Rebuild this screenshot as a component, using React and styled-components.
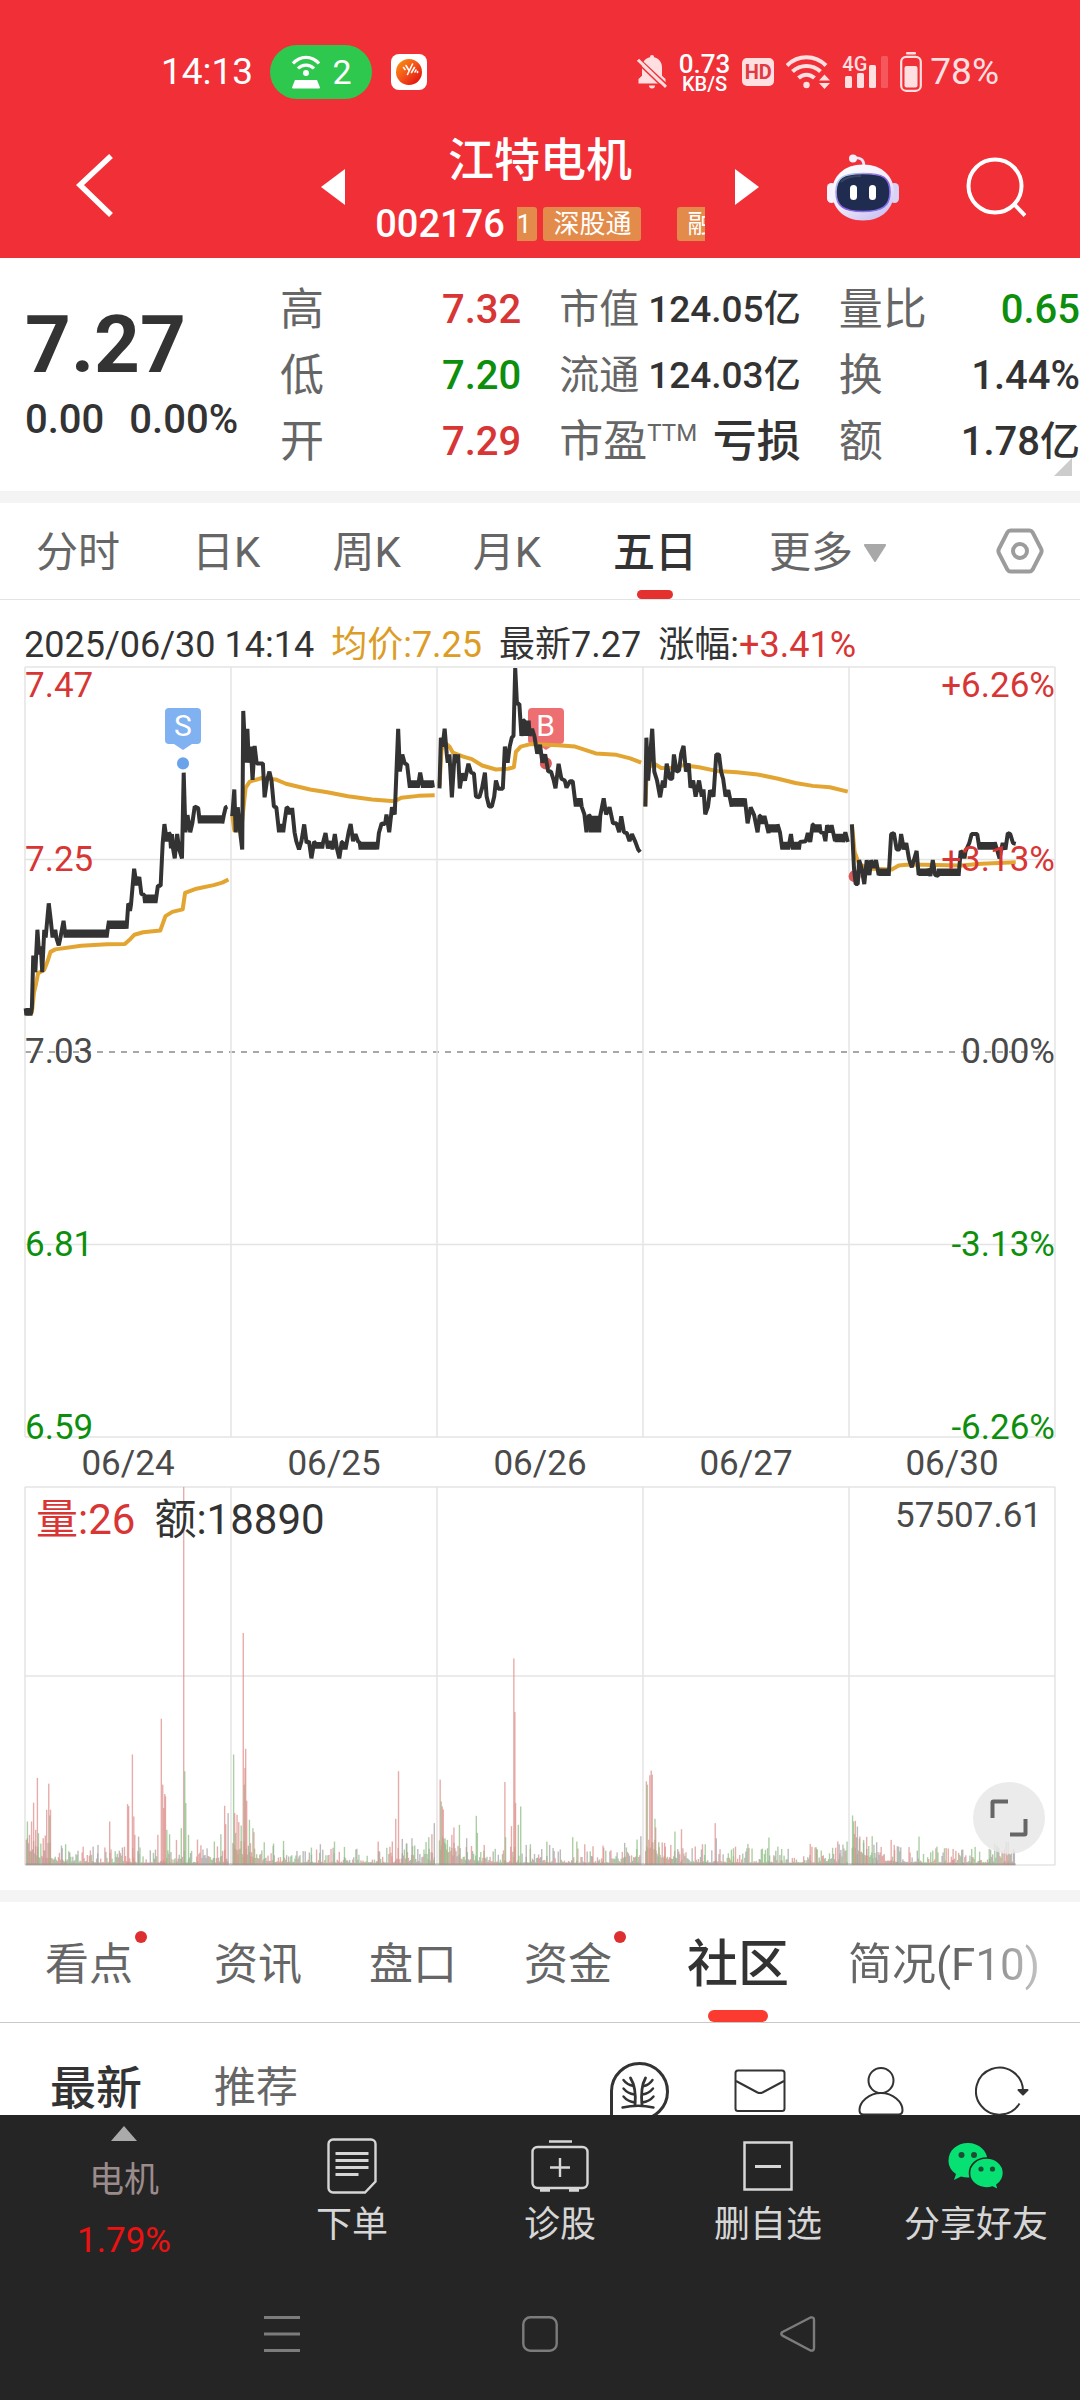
import React from "react";
import styled, { createGlobalStyle, css } from "styled-components";

const RED = "#d83535";
const GREEN = "#0d8f0d";
const INK = "#333333";
const GREY = "#666666";

const GlobalStyle = createGlobalStyle`
  * { box-sizing: border-box; }
  body {
    margin: 0;
    background: #ffffff;
    color: ${INK};
    font-family: Roboto, "Noto Sans CJK SC", sans-serif;
    -webkit-font-smoothing: antialiased;
  }
  button {
    margin: 0;
    padding: 0;
    border: 0;
    background: none;
    font: inherit;
    color: inherit;
    cursor: pointer;
  }
  dl, dd, dt, h1, p { margin: 0; font-weight: inherit; font-size: inherit; }
  svg { display: block; }
`;

/* ---------- page frame ---------- */

const Page = styled.div`
  display: flex;
  flex-direction: column;
  height: 100vh;
  overflow: hidden;
`;

const Content = styled.main`
  flex: 1;
  min-height: 0;
  overflow: hidden;
`;

const Band = styled.div`
  height: 12px;
  background: #f4f4f4;
`;

/* ---------- header ---------- */

const Header = styled.header`
  flex: none;
  background: #f12f37;
  color: #ffffff;
`;

const StatusBar = styled.div`
  display: flex;
  justify-content: space-between;
  align-items: center;
  height: 100px;
  padding: 44px 81px 0 161px;
`;

const StatusGroup = styled.div`
  display: flex;
  align-items: center;
  gap: ${(p) => p.$gap}px;
  color: ${(p) => p.$color || "#ffffff"};
`;

const Clock = styled.span`
  font-size: 37px;
  line-height: 58px;
`;

const Hotspot = styled.span`
  display: flex;
  align-items: center;
  justify-content: center;
  gap: 12px;
  width: 102px;
  height: 54px;
  border-radius: 27px;
  background: #2fc84f;
  font-size: 34px;
`;

const AppBadge = styled.span`
  display: grid;
  place-items: center;
  width: 36px;
  height: 36px;
  margin-left: 2px;
  border-radius: 8px;
  background: #ffffff;
`;

const Speed = styled.span`
  display: flex;
  flex-direction: column;
  align-items: center;
  padding-top: 3px;
  color: #ffffff;
  font-weight: 500;
  font-size: 26px;
  line-height: 20px;
  small { font-size: 20px; line-height: 20px; }
`;

const Hd = styled.span`
  width: 32px;
  height: 28px;
  border-radius: 5px;
  background: #ffdfe0;
  color: #e03a42;
  font-weight: 700;
  font-size: 20px;
  line-height: 28px;
  text-align: center;
`;

const Battery = styled.span`
  display: flex;
  align-items: center;
  gap: 8px;
  font-size: 37px;
  line-height: 58px;
`;

const TitleBar = styled.div`
  display: grid;
  grid-template-columns: minmax(0, 1fr) 390px minmax(0, 1fr);
  align-items: center;
  height: 158px;
  padding-top: 16px;
`;

const LeftTools = styled.div`
  display: flex;
  align-items: center;
  justify-content: space-between;
  padding-left: 74px;
`;

const RightTools = styled.div`
  display: flex;
  align-items: center;
  justify-content: space-between;
  padding-right: 54px;
`;

const Title = styled.div`
  padding-top: 10px;
  text-align: center;
  h1 {
    font-size: 46px;
    font-weight: 500;
    line-height: 64px;
  }
`;

const CodeRow = styled.div`
  display: flex;
  align-items: center;
  justify-content: center;
  gap: 12px;
  height: 64px;
  font-size: 38px;
  font-weight: 500;
`;

const TagStrip = styled.div`
  display: flex;
  width: 188px;
  overflow: hidden;
`;

const Tag = styled.span`
  flex: none;
  height: 34px;
  margin-right: ${(p) => p.$after || 0}px;
  padding: 0 10px;
  border-radius: 3px;
  background: #e38b4a;
  font-size: 26px;
  font-weight: 400;
  line-height: 34px;
  ${(p) => p.$cut && css`
    padding: 0 6px 0 0;
    border-radius: 0 3px 3px 0;
  `}
`;

/* ---------- quote ---------- */

const Quote = styled.section`
  position: relative;
  display: grid;
  grid-template-columns: 242px repeat(3, minmax(0, 1fr));
  column-gap: 38px;
  height: 233px;
  padding: 19px 0 16px;
`;

const PriceBlock = styled.div`
  padding: 22px 0 0 25px;
  font-weight: 500;
  white-space: nowrap;
`;

const Price = styled.p`
  && { font-size: 80px; font-weight: 700; }
  line-height: 92px;
`;

const Change = styled.p`
  display: flex;
  gap: 25px;
  && { font-size: 40px; }
  line-height: 58px;
`;

const Figures = styled.dl`
  display: flex;
  flex-direction: column;
`;

const Figure = styled.div`
  display: flex;
  justify-content: space-between;
  white-space: nowrap;
  line-height: 66px;
  dt {
    display: flex;
    font-size: ${(p) => (p.$compact ? 40 : 44)}px;
    color: ${GREY};
  }
  dd {
    font-size: ${(p) => (p.$compact ? 37 : p.$word ? 44 : 40)}px;
    font-weight: 500;
    color: ${(p) => p.$tone || INK};
  }
  sup {
    font-size: 24px;
    line-height: 48px;
    vertical-align: baseline;
  }
`;

const Corner = styled.svg`
  position: absolute;
  right: 8px;
  bottom: 15px;
`;

/* ---------- period tabs ---------- */

const Periods = styled.nav`
  display: flex;
  align-items: stretch;
  gap: 72px;
  height: 97px;
  padding: 0 36px;
  border-bottom: 1px solid #e4e4e4;
`;

const Period = styled.button`
  position: relative;
  display: flex;
  align-items: center;
  gap: 11px;
  font-size: 42px;
  line-height: 60px;
  white-space: nowrap;
  && {
    padding-top: 4px;
    color: ${(p) => (p.$active ? INK : GREY)};
    font-weight: ${(p) => (p.$active ? 500 : 400)};
  }
  ${(p) => p.$active && css`
    &::after {
      content: "";
      position: absolute;
      left: 50%;
      bottom: 0;
      width: 36px;
      height: 9px;
      margin-left: -18px;
      border-radius: 5px;
      background: #e53030;
    }
  `}
`;

const Settings = styled.button`
  && { margin-left: auto; }
`;

/* ---------- charts ---------- */

const Legend = styled.div`
  display: flex;
  gap: 17px;
  height: 67px;
  padding: 24px 24px 0;
  font-size: 36px;
  line-height: 43px;
  white-space: nowrap;
`;

const Tone = styled.span`
  color: ${(p) => p.$c || INK};
`;

const Plot = styled.div`
  position: relative;
  height: ${(p) => p.$h}px;
  margin: 0 25px;
`;

const Canvas = styled.svg`
  position: absolute;
  inset: 0;
  width: 100%;
  height: 100%;
  overflow: visible;
`;

const AxisLabel = styled.span`
  position: absolute;
  ${(p) => (p.$right ? "right: 0;" : "left: 0;")}
  transform: translateY(${(p) => p.$shift}%);
  font-size: 35px;
  line-height: 38px;
  color: ${(p) => p.$c};
`;

const Pin = styled.span`
  position: absolute;
  display: flex;
  flex-direction: column;
  align-items: center;
  width: 36px;
  margin-left: -18px;
  b {
    width: 36px;
    height: 36px;
    border-radius: 4px;
    background: ${(p) => p.$c};
    color: #ffffff;
    font-size: 30px;
    font-weight: 400;
    line-height: 36px;
    text-align: center;
  }
`;

const Dates = styled.div`
  display: grid;
  grid-template-columns: repeat(5, 1fr);
  height: 50px;
  margin: 0 25px;
  padding-top: 3px;
  color: #4a4a4a;
  font-size: 35px;
  line-height: 48px;
  text-align: center;
`;

const VolumeLegend = styled.div`
  position: relative;
  display: flex;
  align-items: flex-start;
  gap: 19px;
  padding: 0 13px 0 11px;
  font-size: 42px;
  line-height: 66px;
`;

const VolumeMax = styled.span`
  margin-left: auto;
  color: #4a4a4a;
  font-size: 35px;
  line-height: 58px;
`;

const Expand = styled.button`
  && {
    position: absolute;
    right: 10px;
    bottom: 11px;
    display: grid;
    place-items: center;
    width: 72px;
    height: 72px;
    border-radius: 50%;
    background: rgba(232, 232, 232, 0.85);
  }
`;

/* ---------- sections ---------- */

const Sections = styled.nav`
  display: flex;
  gap: 67px;
  height: 121px;
  padding-left: 45px;
  border-bottom: 1px solid #c8c8c8;
  overflow: hidden;
`;

const Section = styled.button`
  position: relative;
  flex: none;
  display: flex;
  white-space: nowrap;
  line-height: 126px;
  && {
    font-size: ${(p) => (p.$active ? 51 : 44)}px;
    font-weight: ${(p) => (p.$active ? 500 : 400)};
    color: ${(p) => (p.$active ? INK : GREY)};
    margin: ${(p) => (p.$active ? "0 -8px 0 -6px" : "0")};
  }
  ${(p) => p.$fade && css`
    && {
      background: linear-gradient(90deg, ${GREY} 60%, #c4c4c4 100%);
      background-clip: text;
      color: transparent;
    }
  `}
  ${(p) => p.$active && css`
    &::after {
      content: "";
      position: absolute;
      left: 50%;
      bottom: 0;
      width: 60px;
      height: 12px;
      margin-left: -30px;
      border-radius: 6px;
      background: #fc3b30;
    }
  `}
`;

const Dot = styled.i`
  width: 12px;
  height: 12px;
  margin: 29px 0 0 2px;
  border-radius: 50%;
  background: #dd2f2f;
`;

const VolumeGap = styled.div`
  height: 25px;
`;

const Feed = styled.div`
  display: flex;
  align-items: center;
  height: 136px;
  padding: 0 48px 0 50px;
`;

const FeedTab = styled.button`
  line-height: 60px;
  && {
    margin-right: 72px;
    padding-bottom: 6px;
    font-size: ${(p) => (p.$active ? 46 : 42)}px;
    font-weight: ${(p) => (p.$active ? 500 : 400)};
    color: ${(p) => (p.$active ? INK : GREY)};
  }
`;

const FeedTools = styled.div`
  display: flex;
  gap: 61px;
  margin-left: auto;
`;

const IconButton = styled.button`
  display: grid;
  place-items: center;
  ${(p) => p.$size && css`
    width: ${p.$size}px;
    height: ${p.$size}px;
  `}
`;

/* ---------- footer ---------- */

const Footer = styled.footer`
  flex: none;
  background: #252525;
  color: #d6d6d6;
`;

const Toolbar = styled.div`
  display: grid;
  grid-template-columns: 248px repeat(4, minmax(0, 1fr));
  height: 170px;
`;

const Tool = styled.button`
  display: flex;
  flex-direction: column;
  align-items: center;
  && { padding-top: 23px; }
  font-size: 36px;
  line-height: 62px;
  white-space: nowrap;
`;

const ToolIcon = styled.span`
  display: grid;
  place-items: center;
  height: 56px;
`;

const Sector = styled.button`
  display: flex;
  flex-direction: column;
  align-items: center;
  && { padding-top: 11px; }
  font-size: 35px;
  span { line-height: 80px; color: #9b8c8c; }
  strong { font-weight: 400; line-height: 40px; color: #ee1111; }
`;

const SystemNav = styled.div`
  display: flex;
  justify-content: center;
  align-items: center;
  gap: 222px;
  height: 115px;
  padding-bottom: 17px;
`;

/* ---------- series data ---------- */

// A pair is a point; four numbers [from, to, high, low] are a stretch that flickers between two ticks.
const PRICE_DAYS = [
  [[74,1423],[76,90,1443,1423],[92,1423],[96,1275],[102,1322],[108,1203],[113,1272],[118,1250],[122,1322],[128,1203],[132,1225],[141,1129],[147,1178],[152,1225],[154,165,1203,1225],[170,1247],[175,1225],[184,1178],[190,1225],[192,314,1203,1225],[316,368,1178,1200],[372,1130],[374,382,1132,1150],[389,1032],[396,1078],[404,1055],[410,1103],[418,452,1105,1128],[458,1080],[466,1080],[472,960],[477,907],[484,955],[490,932],[493,502,935,975],[507,1003],[514,935],[520,978],[528,1003],[533,763],[538,930],[544,882],[552,930],[558,905],[565,858],[575,862],[580,905],[582,645,883,905],[650,880],[655,860],[660,858]],
  [[674,885],[680,810],[684,930],[690,860],[697,930],[703,978],[706,590],[713,735],[718,640],[722,735],[728,690],[733,783],[739,688],[745,737],[763,737],[768,832],[775,785],[782,760],[788,785],[795,858],[802,860],[810,930],[813,825,907,930],[832,860],[836,848,862,880],[855,930],[860,955],[868,978],[875,955],[883,908],[890,960],[897,955],[904,1003],[912,957],[914,940,958,975],[945,932],[952,975],[960,955],[965,978],[972,935],[978,975],[985,1003],[992,957],[994,1005,957,978],[1012,930],[1018,907],[1025,955],[1032,935],[1040,957],[1044,1095,957,978],[1100,932],[1108,905],[1118,907],[1122,880],[1130,930],[1138,860],[1146,880],[1150,785],[1156,640],[1161,760],[1168,712],[1175,737],[1182,740],[1190,805],[1192,1215,785,805],[1220,763],[1228,805],[1230,1258,785,805]],
  [[1276,807],[1280,665],[1285,690],[1291,640],[1297,710],[1300,735],[1305,712],[1312,832],[1320,712],[1326,735],[1330,712],[1335,807],[1342,765],[1350,785],[1360,738],[1368,763],[1376,765],[1382,830],[1392,832],[1400,805],[1408,763],[1413,830],[1420,858],[1428,858],[1435,830],[1440,785],[1447,808],[1460,808],[1466,690],[1474,735],[1480,690],[1486,665],[1491,660],[1496,470],[1501,570],[1508,570],[1514,660],[1520,617],[1523,1540,617,660],[1545,640],[1552,662],[1560,710],[1568,685],[1575,735],[1583,712],[1592,760],[1600,760],[1608,785],[1613,807],[1622,738],[1630,780],[1640,785],[1645,805],[1655,787],[1663,787],[1672,858],[1674,1690,835,858],[1697,880],[1703,930],[1710,882],[1713,1745,884,930],[1753,835],[1760,880],[1770,860],[1780,905],[1790,905],[1798,930],[1804,885],[1812,930],[1820,932],[1828,955],[1835,935],[1845,957],[1853,978],[1859,985]],
  [[1874,858],[1877,665],[1882,785],[1890,690],[1894,640],[1900,760],[1908,785],[1917,832],[1925,785],[1930,805],[1936,738],[1945,780],[1952,780],[1957,712],[1965,760],[1972,757],[1978,710],[1985,688],[1992,760],[2000,737],[2005,805],[2013,785],[2020,830],[2030,785],[2038,830],[2043,810],[2048,880],[2056,858],[2062,812],[2072,830],[2080,712],[2088,712],[2094,760],[2100,780],[2107,830],[2115,812],[2125,858],[2127,2165,835,858],[2171,905],[2180,860],[2190,882],[2200,930],[2206,884],[2208,2220,884,907],[2232,932],[2234,2260,908,930],[2265,930],[2272,978],[2274,2290,957,978],[2297,935],[2303,978],[2305,2325,957,978],[2340,955],[2346,932],[2353,957],[2360,908],[2362,2385,908,930],[2392,932],[2397,955],[2402,910],[2410,930],[2415,910],[2425,955],[2427,2448,935,957],[2455,930],[2462,957]],
  [[2474,908],[2480,1030],[2485,1075],[2491,1075],[2495,1008],[2502,1030],[2510,1075],[2517,1008],[2525,1050],[2530,1008],[2537,1030],[2544,1008],[2552,1050],[2554,2582,1032,1052],[2588,935],[2596,932],[2604,978],[2612,978],[2617,935],[2625,978],[2632,960],[2640,1005],[2648,1028],[2655,1005],[2662,982],[2668,1050],[2670,2695,1032,1052],[2702,1052],[2709,1008],[2716,1050],[2725,1052],[2727,2785,1032,1052],[2790,982],[2792,2806,984,1003],[2815,960],[2822,935],[2838,935],[2845,978],[2847,2890,958,978],[2903,1003],[2912,960],[2920,978],[2927,932],[2934,935],[2942,960],[2950,962]],
];

const AVERAGE_DAYS = [
  "74,1440 92,1435 98,1380 104,1355 110,1325 128,1315 138,1290 146,1265 160,1258 235,1248 310,1244 362,1243 375,1232 390,1217 415,1210 465,1205 480,1165 500,1153 530,1146 537,1100 570,1088 620,1078 645,1071 663,1062",
  "674,880 680,925 700,925 708,850 713,805 725,788 760,778 800,782 830,794 900,810 950,818 1010,829 1080,838 1146,843 1165,833 1215,828 1262,826",
  "1276,800 1282,700 1290,678 1305,690 1315,707 1345,718 1370,725 1400,743 1440,754 1475,752 1492,748 1498,705 1512,690 1540,683 1620,686 1670,690 1730,709 1790,713 1830,723 1862,735",
  "1874,858 1878,760 1895,735 1920,750 1950,750 1985,742 2030,748 2080,758 2140,762 2200,768 2260,780 2310,792 2360,800 2410,804 2462,816",
  "2474,908 2482,985 2495,1020 2530,1032 2590,1034 2610,1023 2640,1020 2720,1022 2790,1023 2850,1018 2900,1016 2950,1014",
];

function pricePath(day) {
  const out = [];
  day.forEach((p) => {
    if (p.length === 2) {
      out.push(p.join(","));
      return;
    }
    const [from, to, a, b] = p;
    for (let x = from, i = 0; x <= to; x += 3, i += 1) {
      out.push(`${x},${i % 2 ? b : a}`);
    }
  });
  return out.join(" ");
}

const BAR = { r: "#dd908c", g: "#8fbd86", k: "#a5a1a3" };

const SPIKES = [
  [79,130,"g"],[85,90,"r"],[91,130,"r"],[97,186,"r"],[103,105,"r"],[108,260,"r"],[111,95,"g"],[125,80,"r"],[131,88,"r"],[135,165,"r"],[141,243,"r"],[144,148,"g"],[146,165,"r"],[180,50,"k"],[190,62,"g"],[270,55,"k"],[284,60,"k"],[318,130,"r"],[370,182,"r"],[373,176,"r"],[384,330,"r"],[388,145,"r"],[391,90,"r"],[402,85,"k"],[458,90,"r"],[468,437,"r"],[472,240,"r"],[475,170,"r"],[478,212,"r"],[480,205,"r"],[484,105,"g"],[492,92,"g"],[512,75,"r"],[526,110,"g"],[533,1129,"r"],[536,280,"g"],[539,185,"g"],[547,90,"g"],[573,76,"r"],[622,70,"g"],[641,92,"g"],[652,177,"r"],[655,122,"r"],[662,155,"k"],
  [678,330,"g"],[681,155,"r"],[684,96,"g"],[688,150,"r"],[693,128,"r"],[700,118,"g"],[706,693,"r"],[709,240,"g"],[711,290,"r"],[713,347,"r"],[716,192,"r"],[724,135,"g"],[727,65,"r"],[734,110,"g"],[737,98,"r"],[767,68,"g"],[794,64,"g"],[823,72,"g"],[904,52,"g"],[930,62,"k"],[971,70,"g"],[1000,54,"g"],[1098,70,"r"],[1139,70,"r"],[1149,138,"r"],[1157,280,"r"],[1168,78,"k"],[1181,64,"g"],[1196,80,"k"],[1245,83,"g"],[1254,92,"r"],[1261,125,"k"],
  [1278,255,"r"],[1281,190,"g"],[1284,175,"r"],[1287,166,"r"],[1292,80,"g"],[1299,75,"g"],[1312,90,"r"],[1318,112,"r"],[1334,120,"g"],[1355,80,"k"],[1383,147,"g"],[1386,96,"g"],[1406,60,"r"],[1466,248,"r"],[1468,83,"g"],[1485,116,"r"],[1492,617,"r"],[1495,457,"r"],[1497,185,"r"],[1505,120,"g"],[1512,175,"g"],[1528,60,"k"],[1540,62,"g"],[1588,70,"g"],[1596,60,"k"],[1663,83,"g"],[1675,70,"g"],[1698,62,"r"],[1722,56,"r"],[1751,58,"r"],[1814,66,"k"],[1850,76,"g"],[1861,86,"k"],
  [1877,250,"r"],[1880,240,"g"],[1887,268,"r"],[1891,282,"r"],[1894,270,"r"],[1902,138,"g"],[1904,112,"r"],[1913,68,"g"],[1930,66,"r"],[1948,60,"r"],[1960,100,"g"],[1979,107,"r"],[2040,62,"r"],[2048,62,"g"],[2077,125,"r"],[2080,80,"k"],[2130,50,"g"],[2172,63,"g"],[2233,82,"g"],[2270,48,"g"],[2353,63,"r"],[2372,48,"g"],[2437,62,"k"],[2460,70,"g"],
  [2476,148,"g"],[2479,130,"g"],[2484,132,"r"],[2490,115,"k"],[2497,85,"r"],[2508,75,"g"],[2517,84,"r"],[2533,86,"g"],[2546,68,"k"],[2588,75,"r"],[2597,60,"r"],[2606,56,"k"],[2669,85,"g"],[2743,50,"g"],[2768,48,"r"],[2776,42,"r"],[2796,46,"k"],[2822,48,"g"],[2845,40,"g"],[2873,48,"g"],[2917,48,"r"],[2928,70,"r"],
];

const DAY_SPANS = [[76, 662], [676, 1262], [1276, 1861], [1875, 2462], [2475, 2948]];

function volumeBars() {
  let seed = 17;
  const rnd = () => {
    seed = (seed * 1103515245 + 12345) % 2147483648;
    return seed / 2147483648;
  };
  const bars = [];
  DAY_SPANS.forEach(([from, to]) => {
    for (let x = from; x < to; x += 3) {
      const t = (x - from) / (to - from);
      const open = Math.exp(-(x - from) / 45) * 70;
      const close = t > 0.85 ? 20 : 0;
      const h = 7 + rnd() ** 3 * 48 + open * (0.4 + rnd() * 0.6) + close * rnd();
      const k = rnd();
      bars.push([x, h, k < 0.32 ? "r" : k < 0.64 ? "g" : "k"]);
    }
  });
  return bars.concat(SPIKES);
}

const BARS = volumeBars();
const BOX_X = 72;
const BOX_W = 2992;

function Grid({ rows, x, y, w, h, dashed }) {
  return (
    <g stroke="#e4e4e4" strokeWidth="1.500" fill="none">
      {Array.from({ length: rows + 1 }, (_, i) => {
        const yy = y + (h * i) / rows;
        const dash = i === dashed;
        return (
          <line key={`h${i}`} x1={x} x2={x + w} y1={yy} y2={yy} vectorEffect="non-scaling-stroke"
            stroke={dash ? "#8a8a8a" : undefined} strokeDasharray={dash ? "6 6" : undefined} />
        );
      })}
      {[0, 1, 2, 3, 4, 5].map((i) => (
        <line key={`v${i}`} x1={x + (w * i) / 5} x2={x + (w * i) / 5} y1={y} y2={y + h} vectorEffect="non-scaling-stroke" />
      ))}
    </g>
  );
}

const LEVELS = [
  { price: "7.47", pct: "+6.26%", at: 0, shift: 0, c: RED },
  { price: "7.25", pct: "+3.13%", at: 25, shift: -50, c: RED },
  { price: "7.03", pct: "0.00%", at: 50, shift: -50, c: "#4a4a4a" },
  { price: "6.81", pct: "-3.13%", at: 75, shift: -50, c: GREEN },
  { price: "6.59", pct: "-6.26%", at: 100, shift: -75, c: GREEN },
];

const PINS = [
  { t: "S", left: 15.34, c: "#80b1f0" },
  { t: "B", left: 50.55, c: "#ee6f72" },
];

function PriceChart() {
  return (
    <Plot $h={770}>
      {PINS.map((p) => (
        <Pin key={p.t} $c={p.c} style={{ left: `${p.left}%`, top: "5.3%" }}>
          <b>{p.t}</b>
          <svg width="18" height="6" viewBox="0 0 18 6"><path d="M0 0h18L9 6z" fill={p.c} /></svg>
        </Pin>
      ))}
      <Canvas viewBox={`${BOX_X} 467 ${BOX_W} 2157`} preserveAspectRatio="none" aria-hidden="true">
        <Grid rows={4} x={BOX_X} y={467} w={BOX_W} h={2157} dashed={2} />
        <ellipse cx="531" cy="737" rx="17.5" ry="17" fill="#6ba3ea" />
        <ellipse cx="1585" cy="737" rx="17.5" ry="17" fill="#dc5a5a" />
        <ellipse cx="2482" cy="1053" rx="17.5" ry="17" fill="#dc5a5a" />
        {AVERAGE_DAYS.map((d, i) => (
          <polyline key={i} points={d} fill="none" stroke="#e3a532" strokeWidth="4" strokeLinejoin="round" vectorEffect="non-scaling-stroke" />
        ))}
        {PRICE_DAYS.map((d, i) => (
          <polyline key={i} points={pricePath(d)} fill="none" stroke={INK} strokeWidth="4" strokeLinejoin="bevel" vectorEffect="non-scaling-stroke" />
        ))}
      </Canvas>
      {LEVELS.map((l) => (
        <React.Fragment key={l.price}>
          <AxisLabel $c={l.c} $shift={l.shift} style={{ top: `${l.at}%` }}>{l.price}</AxisLabel>
          <AxisLabel $right $c={l.c} $shift={l.shift} style={{ top: `${l.at}%` }}>{l.pct}</AxisLabel>
        </React.Fragment>
      ))}
    </Plot>
  );
}

function VolumeChart() {
  return (
    <Plot $h={378}>
      <Canvas viewBox={`${BOX_X} 0 ${BOX_W} 1129`} preserveAspectRatio="none" aria-hidden="true">
        <Grid rows={2} x={BOX_X} y={0} w={BOX_W} h={1129} />
        {BARS.map(([x, h, k], i) => (
          <rect key={i} x={x - 2} y={1129 - h} width="4" height={h} fill={BAR[k]} opacity="0.75" />
        ))}
        <rect x="74" y="1124" width="2876" height="6" fill="#9d9088" opacity="0.6" />
      </Canvas>
      <VolumeLegend>
        <Tone $c={RED}>量:26</Tone>
        <Tone>额:18890</Tone>
        <VolumeMax>57507.61</VolumeMax>
      </VolumeLegend>
      <Expand aria-label="全屏">
        <svg width="38" height="38" viewBox="0 0 38 38" fill="none" stroke="#666" strokeWidth="4" strokeLinejoin="round">
          <path d="M2.500 19V3.500a1 1 0 0 1 1-1H18" />
          <path d="M35.500 20V34.500a1 1 0 0 1-1 1H20" />
        </svg>
      </Expand>
    </Plot>
  );
}

/* ---------- icons ---------- */

const HotspotIcon = () => (
  <svg width="30" height="34" viewBox="0 0 30 34" fill="none" stroke="#fff" strokeWidth="3.200">
    <path d="M2 8.500C9 .2 21 .2 28 8.500" />
    <path d="M7 13.500c4.500-4.600 11.500-4.600 16 0" />
    <circle cx="15" cy="18" r="3" fill="#fff" stroke="none" />
    <path d="M4 25h22l3 7.500a1 1 0 0 1-1 1H2a1 1 0 0 1-1-1z" fill="#fff" stroke="none" />
  </svg>
);

const AppIcon = () => (
  <svg width="26" height="26" viewBox="0 0 26 26">
    <defs>
      <linearGradient id="app" x1="0" y1="0" x2="1" y2="1">
        <stop offset="0.1" stopColor="#f98a10" />
        <stop offset="0.5" stopColor="#f4501a" />
        <stop offset="0.9" stopColor="#e0120f" />
      </linearGradient>
    </defs>
    <circle cx="13" cy="13" r="13" fill="url(#app)" />
    <path d="M7.500 8.500l1.500 2M10 6.500l3 5M11.500 15.500L16.500 5M15.500 13.500l3-5M19 13l1-2M21.500 13.500v-1" stroke="#fff" strokeWidth="1.600" strokeLinecap="round" />
  </svg>
);

const BellOff = () => (
  <svg width="30" height="34" viewBox="0 0 30 34" fill="#ffdfe0">
    <path d="M15 0a2 2 0 0 1 2 2.200c4.800 1 8 5 8 10v8.500l3.500 3.300v4.500H1.500V24L5 20.700v-8.500c0-5 3.200-9 8-10A2 2 0 0 1 15 0z" />
    <path d="M12 30.500h6a3 3 0 0 1-6 0z" />
    <path d="M0 2.500l30 28" stroke="#f12f37" strokeWidth="3" />
    <path d="M1 4.800l28 27" stroke="#ffdfe0" strokeWidth="3" />
    <path d="M0 7.500l27 26" stroke="#f12f37" strokeWidth="1.500" />
  </svg>
);

const WifiIcon = () => (
  <svg width="44" height="34" viewBox="0 0 44 34" fill="none" stroke="#ffdfe0" strokeWidth="4">
    <path d="M1 10.500C12-.5 29-.5 40 10.500" />
    <path d="M6.500 16.500c8-7.500 20-7.500 28 0" />
    <path d="M12.500 23c4.800-4.500 11.200-4.500 16 0" />
    <circle cx="20.500" cy="30" r="3.200" fill="#ffdfe0" stroke="none" />
    <path d="M38.500 19.500l5.500 6H33zM38.500 34l5.500-6H33z" fill="#ffdfe0" stroke="none" />
  </svg>
);

const Signal = styled.span`
  position: relative;
  width: 46px;
  height: 32px;
  font-size: 20px;
  font-weight: 500;
  line-height: 16px;
  svg { position: absolute; inset: 0; }
`;

const SignalIcon = () => (
  <Signal>
    4G
    <svg width="46" height="32" viewBox="0 0 46 32" fill="#ffdfe0">
      <rect x="3" y="20" width="7" height="12" rx="1.500" />
      <rect x="15" y="17" width="7" height="15" rx="1.500" />
      <rect x="27" y="9" width="7" height="23" rx="1.500" />
      <rect x="39" y="0" width="7" height="32" rx="1.500" fill="#f6575d" />
    </svg>
  </Signal>
);

const BatteryIcon = () => (
  <svg width="22" height="40" viewBox="0 0 22 40" fill="none">
    <rect x="6" y="0" width="10" height="2.500" rx="1" fill="#ffdfe0" />
    <rect x="1.200" y="4.800" width="19.600" height="34" rx="5" stroke="#ffdfe0" strokeWidth="2.200" />
    <rect x="4.500" y="14" width="13" height="21.500" rx="2" fill="#ffdfe0" />
  </svg>
);

const Robot = () => (
  <svg width="72" height="67" viewBox="0 0 72 67">
    <defs>
      <linearGradient id="shell" x1="0" y1="0" x2="0.600" y2="1">
        <stop offset="0" stopColor="#ffffff" />
        <stop offset="0.600" stopColor="#f0ecfb" />
        <stop offset="1" stopColor="#cfc6f2" />
      </linearGradient>
      <linearGradient id="rim" x1="0" y1="0" x2="1" y2="1">
        <stop offset="0" stopColor="#bfe6f5" />
        <stop offset="0.500" stopColor="#8c5be0" />
        <stop offset="1" stopColor="#7a7df0" />
      </linearGradient>
    </defs>
    <path d="M26 4.500c7-2 11 1.500 11 7" fill="none" stroke="#e9e3fa" strokeWidth="2.600" />
    <circle cx="26" cy="4.500" r="4" fill="#f3effc" />
    <rect x="0" y="29" width="9" height="20" rx="4.500" fill="#f5f2fd" />
    <rect x="63" y="29" width="9" height="20" rx="4.500" fill="#d9d2f5" />
    <path d="M36 10.500c19 0 31 12 31 27.500S56 66.500 36 66.500 5 53.500 5 38s12-27.500 31-27.500z" fill="url(#shell)" />
    <path d="M36 19.500c20 0 27 4 27 18.500S55 57.500 36 57.500 9 52.500 9 38s7-18.500 27-18.500z" fill="#1f2c50" stroke="url(#rim)" strokeWidth="1.600" />
    <path d="M14 28c4-5 14-6 20-6" stroke="#46506f" strokeWidth="2" fill="none" opacity="0.700" />
    <rect x="23" y="31" width="7" height="15" rx="3.500" fill="#fff" />
    <rect x="42" y="31" width="7" height="15" rx="3.500" fill="#fff" />
  </svg>
);

const LeafIcon = () => (
  <svg width="60" height="60" viewBox="0 0 60 60" fill="none" stroke={INK} strokeWidth="2.400" strokeLinecap="round">
    <path d="M2.500 59V30A28 28 0 1 1 30.500 58.500H2.500" strokeWidth="3" />
    <path d="M21.500 17c5 8 5.500 17 4.500 27.500M36.500 17c-4 7-4.500 17-3.500 27.500" strokeWidth="2.800" />
    <path d="M14.500 19q3.500 5 10.500 6M14.500 27.500q4 5 11 6M14.500 35.500q4 5 11.500 6" />
    <path d="M43.500 19q-3.500 5-8.500 6M44 27.500q-4 5-10.500 6M44.500 35.500q-4 5-11.500 6" />
    <path d="M13.500 46.500c9-2 22-2 31 0" />
  </svg>
);

const MailIcon = () => (
  <svg width="52" height="44" viewBox="0 0 52 44" fill="none" stroke={INK} strokeWidth="2" strokeLinejoin="round">
    <rect x="1.500" y="1.500" width="49" height="40.500" rx="2.500" />
    <path d="M2 12l21.500 11.500q2.500 1.200 5 0L50 12" />
  </svg>
);

const PersonIcon = () => (
  <svg width="46" height="50" viewBox="0 0 46 50" fill="none" stroke={INK} strokeWidth="2">
    <circle cx="23" cy="14.500" r="12.500" />
    <path d="M23 27C11 27 1.500 36 1.500 44q0 4.500 4 4.500h35q4 0 4-4.500C44.500 36 35 27 23 27z" />
  </svg>
);

const RefreshIcon = () => (
  <svg width="54" height="50" viewBox="0 0 54 50" fill="none" stroke={INK} strokeWidth="2">
    <path d="M48 25A23.500 23.500 0 1 0 44.500 37.500" />
    <path d="M43.500 24h9L48 28.500z" fill={INK} strokeLinejoin="round" />
  </svg>
);

const OrderIcon = () => (
  <svg width="50" height="56" viewBox="0 0 50 56" fill="none" stroke="#d6d6d6" strokeWidth="2.400">
    <path d="M6 1.500h38a4.500 4.500 0 0 1 4.500 4.500v37.500L38 54.500H6A4.500 4.500 0 0 1 1.500 50V6A4.500 4.500 0 0 1 6 1.500z" />
    <path d="M8.500 15.500h33M8.500 22.500h33M8.500 29.500h33M8.500 36.500h23" strokeWidth="3" />
  </svg>
);

const KitIcon = () => (
  <svg width="58" height="52" viewBox="0 0 58 52" fill="none" stroke="#d6d6d6" strokeWidth="2.400">
    <rect x="1.500" y="7" width="55" height="41" rx="5" />
    <path d="M18 1.500h23M29 18v19M19 27.500h20" />
    <path d="M9 50.300h10M38 50.300h10" strokeWidth="3" />
  </svg>
);

const RemoveIcon = () => (
  <svg width="50" height="50" viewBox="0 0 50 50" fill="none" stroke="#d6d6d6" strokeWidth="2.500">
    <rect x="1.500" y="1.500" width="47" height="47" />
    <path d="M12 25.500h26" strokeWidth="3" />
  </svg>
);

const WechatIcon = () => (
  <svg width="56" height="48" viewBox="0 0 56 48">
    <path d="M20 1C9 1 .5 8.500.500 18.500c0 6 3 10.500 7.500 13.500L6 38l7-3.500c2.200.6 4.500.9 7 .9 11 0 19.500-7.500 19.500-17S31 1 20 1z" fill="#07e072" />
    <circle cx="13.500" cy="13" r="3" fill="#1d4d33" />
    <circle cx="26" cy="13" r="3" fill="#1d4d33" />
    <path d="M38.500 16C29 16 21.500 22.500 21.500 31s7.500 15 17 15c2 0 4-.3 6-.9L50.500 48l-1.500-5c4-3 6.500-7 6.500-12C55.500 22.500 48 16 38.500 16z" fill="#07e072" stroke="#252525" strokeWidth="1.600" />
    <circle cx="33" cy="27" r="2.600" fill="#1d4d33" />
    <circle cx="44.500" cy="27" r="2.600" fill="#1d4d33" />
  </svg>
);

/* ---------- page ---------- */

const QUOTE = [
  [
    { k: "高", v: "7.32", tone: RED },
    { k: "低", v: "7.20", tone: GREEN },
    { k: "开", v: "7.29", tone: RED },
  ],
  [
    { k: "市值", v: "124.05亿", compact: true },
    { k: "流通", v: "124.03亿", compact: true },
    { k: "市盈", sup: "TTM", v: "亏损", word: true },
  ],
  [
    { k: "量比", v: "0.65", tone: GREEN },
    { k: "换", v: "1.44%" },
    { k: "额", v: "1.78亿" },
  ],
];

const TOOLS = [
  { t: "下单", icon: <OrderIcon /> },
  { t: "诊股", icon: <KitIcon /> },
  { t: "删自选", icon: <RemoveIcon /> },
  { t: "分享好友", icon: <WechatIcon /> },
];

export default function App() {
  return (
    <Page>
      <GlobalStyle />
      <Header>
        <StatusBar>
          <StatusGroup $gap={17}>
            <Clock>14:13</Clock>
            <Hotspot><HotspotIcon />2</Hotspot>
            <AppBadge><AppIcon /></AppBadge>
          </StatusGroup>
          <StatusGroup $gap={12} $color="#ffdfe0">
            <BellOff />
            <Speed>0.73<small>KB/S</small></Speed>
            <Hd>HD</Hd>
            <WifiIcon />
            <SignalIcon />
            <Battery><BatteryIcon />78%</Battery>
          </StatusGroup>
        </StatusBar>
        <TitleBar>
          <LeftTools>
            <IconButton aria-label="返回">
              <svg width="40" height="66" viewBox="0 0 40 66" fill="none" stroke="#fff" strokeWidth="5.500"><path d="M37 2L6 31 37 61" /></svg>
            </IconButton>
            <IconButton aria-label="上一只">
              <svg width="24" height="36" viewBox="0 0 24 36" fill="#fff"><path d="M24 0v36L0 18z" /></svg>
            </IconButton>
          </LeftTools>
          <Title>
            <h1>江特电机</h1>
            <CodeRow>
              <span>002176</span>
              <TagStrip>
                <Tag $cut $after={6}>1</Tag>
                <Tag $after={36}>深股通</Tag>
                <Tag>融</Tag>
              </TagStrip>
            </CodeRow>
          </Title>
          <RightTools>
            <IconButton aria-label="下一只">
              <svg width="24" height="36" viewBox="0 0 24 36" fill="#fff"><path d="M0 0v36l24-18z" /></svg>
            </IconButton>
            <IconButton aria-label="智能助手"><Robot /></IconButton>
            <IconButton aria-label="搜索">
              <svg width="60" height="60" viewBox="0 0 60 60" fill="none" stroke="#fff" strokeWidth="4"><circle cx="29" cy="29" r="26.500" /><path d="M48 47l11 11.500" /></svg>
            </IconButton>
          </RightTools>
        </TitleBar>
      </Header>

      <Content>
        <Quote>
          <PriceBlock>
            <Price>7.27</Price>
            <Change><span>0.00</span><span>0.00%</span></Change>
          </PriceBlock>
          {QUOTE.map((col, i) => (
            <Figures key={i}>
              {col.map((f) => (
                <Figure key={f.k} $tone={f.tone} $compact={f.compact} $word={f.word}>
                  <dt>{f.k}{f.sup && <sup>{f.sup}</sup>}</dt>
                  <dd>{f.v}</dd>
                </Figure>
              ))}
            </Figures>
          ))}
          <Corner width="18" height="18" viewBox="0 0 18 18" aria-hidden="true"><path d="M18 0v18H0z" fill="#cccccc" /></Corner>
        </Quote>

        <Band />

        <Periods>
          <Period>分时</Period>
          <Period>日K</Period>
          <Period>周K</Period>
          <Period>月K</Period>
          <Period $active>五日</Period>
          <Period>
            更多
            <svg width="22" height="18" viewBox="0 0 22 18" fill="#a8a8a8"><path d="M1 0h20a1 1 0 0 1 1 1.500L12 17.300a1.200 1.200 0 0 1-2 0L0 1.500A1 1 0 0 1 1 0z" /></svg>
          </Period>
          <Settings aria-label="设置">
            <svg width="48" height="46" viewBox="0 0 48 46" fill="none" stroke="#9c9c9c" strokeWidth="4" strokeLinejoin="round">
              <path d="M14.500 2.500h19q2 0 3 1.700l8.500 16.500q1.200 2.300 0 4.600l-8.500 16.500q-1 1.700-3 1.700h-19q-2 0-3-1.700L3 25.300q-1.200-2.300 0-4.600L11.500 4.200q1-1.700 3-1.700z" />
              <circle cx="24" cy="23" r="7" />
            </svg>
          </Settings>
        </Periods>

        <Legend>
          <Tone>2025/06/30 14:14</Tone>
          <Tone $c="#dc9c26">均价:7.25</Tone>
          <Tone>最新7.27</Tone>
          <span>涨幅:<Tone $c={RED}>+3.41%</Tone></span>
        </Legend>

        <PriceChart />
        <Dates>
          {["06/24", "06/25", "06/26", "06/27", "06/30"].map((d) => <span key={d}>{d}</span>)}
        </Dates>
        <VolumeChart />
        <VolumeGap />
        <Band />

        <Sections>
          <Section>看点<Dot /></Section>
          <Section>资讯</Section>
          <Section>盘口</Section>
          <Section>资金<Dot /></Section>
          <Section $active>社区</Section>
          <Section $fade>简况(F10)</Section>
        </Sections>

        <Feed>
          <FeedTab $active>最新</FeedTab>
          <FeedTab>推荐</FeedTab>
          <FeedTools>
            <IconButton $size={60} aria-label="韭圈"><LeafIcon /></IconButton>
            <IconButton $size={60} aria-label="消息"><MailIcon /></IconButton>
            <IconButton $size={60} aria-label="我的"><PersonIcon /></IconButton>
            <IconButton $size={60} aria-label="刷新"><RefreshIcon /></IconButton>
          </FeedTools>
        </Feed>
      </Content>

      <Footer>
        <Toolbar>
          <Sector>
            <svg width="26" height="15" viewBox="0 0 26 15" fill="#aaaaaa"><path d="M13 0l13 15H0z" /></svg>
            <span>电机</span>
            <strong>1.79%</strong>
          </Sector>
          {TOOLS.map((t) => (
            <Tool key={t.t}><ToolIcon>{t.icon}</ToolIcon>{t.t}</Tool>
          ))}
        </Toolbar>
        <SystemNav>
          <IconButton $size={36} aria-label="菜单">
            <svg width="36" height="36" viewBox="0 0 36 36" stroke="#7c7c7c" strokeWidth="3"><path d="M0 1.500h36M0 18h36M0 34.500h36" /></svg>
          </IconButton>
          <IconButton $size={36} aria-label="主页">
            <svg width="36" height="36" viewBox="0 0 36 36" fill="none" stroke="#7c7c7c" strokeWidth="2.400"><rect x="1.300" y="1.300" width="33.400" height="33.400" rx="7" /></svg>
          </IconButton>
          <IconButton $size={36} aria-label="后退">
            <svg width="36" height="36" viewBox="0 0 36 36" fill="none" stroke="#7c7c7c" strokeWidth="2.400" strokeLinejoin="round"><path d="M30.500 1.500L2.500 16q-2.500 1.800 0 3.600L30.500 34.500q3.500.8 3.500-2.500V4q0-3.300-3.500-2.500z" /></svg>
          </IconButton>
        </SystemNav>
      </Footer>
    </Page>
  );
}
